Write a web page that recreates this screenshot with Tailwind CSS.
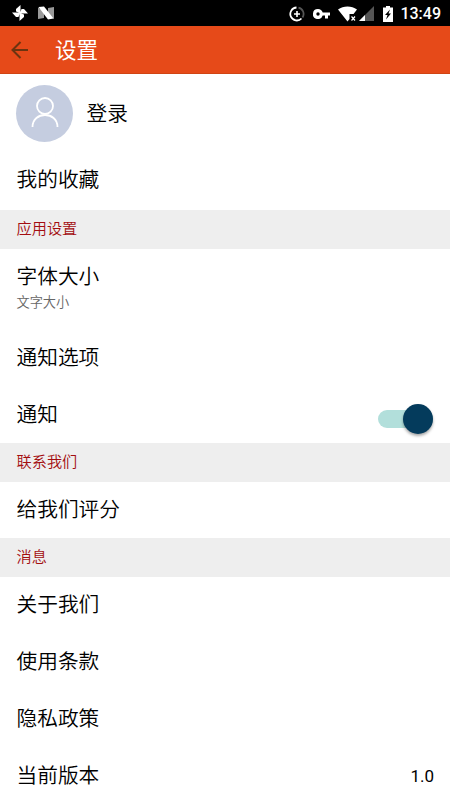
<!DOCTYPE html>
<html lang="zh-CN">
<head>
    <meta charset="UTF-8">
    <meta name="viewport" content="width=device-width, initial-scale=1.0">
    <title>设置</title>
    <script src="https://cdn.jsdelivr.net/npm/@tailwindcss/browser@4"></script>
</head>
<body class="w-[450px] h-[800px] overflow-hidden bg-white text-black font-['Roboto','Noto_Sans_CJK_SC',sans-serif]">
    <!-- Status bar -->
    <div class="flex h-[26px] items-center justify-between bg-black pl-3 pr-[9px] text-white">
        <div class="flex items-center gap-[10px]">
            <svg class="h-4 w-4" viewBox="0 0 16 16" fill="#fff">
                <path d="M8.500 8L8.500 0L4 4V6.500zM8 8.500L16 8.500L12 4H9.500zM7.500 8L7.500 16L12 12V9.500zM8 7.500L0 7.500L4 12H6.500z" />
            </svg>
            <svg class="h-[14px] w-4" viewBox="0 0 16 14">
                <path fill="#999" d="M0 1.500L6 5V12L0 13zM10 2L16 1V13L10 9z" />
                <path fill="#fff" d="M0.500 1L6 .5L15.500 12.500L10 13.500z" />
            </svg>
        </div>
        <div class="flex items-center pt-px">
            <svg class="h-4 w-4" viewBox="0 0 16 16" fill="none" stroke="#fff">
                <path stroke="#555" stroke-width="1.800" d="M9.500 1.600A6.500 6.500 0 0 1 13.500 11.500" />
                <path stroke-width="1.800" d="M7.500 1.500A6.500 6.500 0 1 0 12.500 12.500" />
                <path stroke-width="1.600" d="M8 5V11M5 8H11" />
            </svg>
            <svg class="ml-2 h-[10px] w-[17px]" viewBox="0 0 17 10" fill="#fff">
                <path fill-rule="evenodd" d="M5 0A5 5 0 1 0 9.700 6.500H12V9.500H15V6.500H17V3.500H9.700A5 5 0 0 0 5 0zM5 3.300A1.700 1.700 0 1 1 5 6.700A1.700 1.700 0 0 1 5 3.300z" />
            </svg>
            <svg class="ml-2 h-4 w-5" viewBox="0 0 20 16">
                <path fill="#fff" d="M0 3.500C5.500-.5 13.500-.5 19 3.500L15.500 8H11.500V13L9.500 15.500z" />
                <path stroke="#fff" stroke-width="1.200" d="M13.500 10.500L17 14.500M17 10.500L13.500 14.500" />
            </svg>
            <svg class="ml-px h-[15px] w-[15px]" viewBox="0 0 15 15">
                <path fill="#555" d="M15 0V15H0z" />
                <path fill="#fff" d="M6 9V15H0z" />
            </svg>
            <svg class="ml-[9px] h-4 w-[10px]" viewBox="0 0 10 16">
                <path fill="#fff" d="M3 0H7V1.500H10V16H0V1.500H3z" />
                <path fill="#000" d="M7 3.500L2 9H4.500L3 13.500L8 7.500H5.500z" />
            </svg>
            <span class="ml-[7px] text-[16px] font-medium leading-[24px]">13:49</span>
        </div>
    </div>

    <!-- App bar -->
    <header class="flex h-12 items-center border-b border-[#d04414] bg-[#e64a19] pl-[11px] text-white">
        <svg class="h-[18px] w-[18px]" viewBox="0 0 18 18" fill="none" stroke="#6b3410" stroke-width="2">
            <path d="M17 9H2M9.500 1L1.500 9L9.500 17" />
        </svg>
        <h1 class="ml-[26px] pt-[3px] text-[21.500px]">设置</h1>
    </header>

    <main class="text-[20.700px] font-[350] leading-[30px]">
        <!-- Account -->
        <div class="flex h-[79px] items-center pl-4">
            <div class="h-[57px] w-[57px] rounded-full bg-[#c5cde0]">
                <svg class="h-full w-full" viewBox="0 0 57 57" fill="none" stroke="#fff" stroke-width="1.800">
                    <circle cx="29" cy="21" r="8" />
                    <path d="M16.500 42C16.500 26 41.500 26 41.500 42" />
                </svg>
            </div>
            <span class="ml-[13.500px]">登录</span>
        </div>
        <div class="flex h-[57px] items-center pb-[3px] pl-[16.500px]">我的收藏</div>

        <h2 class="flex h-[39px] items-center bg-[#eee] pb-0.5 pl-[16.500px] text-[15.200px] text-[#a30d10]">应用设置</h2>
        <div class="flex h-20 flex-col justify-center pb-0.5 pl-[16.500px]">
            <div>字体大小</div>
            <div class="text-[13.200px] leading-[22px] text-[#666]">文字大小</div>
        </div>
        <div class="flex h-[57px] items-center pl-[16.500px]">通知选项</div>
        <div class="flex h-[57px] items-center justify-between pl-[16.500px] pr-[17px]">
            <span>通知</span>
            <div class="mt-2 flex h-[18px] w-[55px] items-center justify-end rounded-full bg-[#b2dfdb]">
                <div class="h-[30px] w-[30px] shrink-0 rounded-full bg-[#043b5c] shadow-[0_2px_3px_rgba(0,0,0,0.35)]"></div>
            </div>
        </div>

        <h2 class="flex h-[39px] items-center bg-[#eee] pb-0.5 pl-[16.500px] text-[15.200px] text-[#a30d10]">联系我们</h2>
        <div class="flex h-14 items-center pl-[16.500px]">给我们评分</div>

        <h2 class="flex h-[39px] items-center bg-[#eee] pb-0.5 pl-[16.500px] text-[15.200px] text-[#a30d10]">消息</h2>
        <div class="flex h-[57px] items-center pb-0.5 pl-[16.500px]">关于我们</div>
        <div class="flex h-[57px] items-center pb-0.5 pl-[16.500px]">使用条款</div>
        <div class="flex h-[57px] items-center pb-0.5 pl-[16.500px]">隐私政策</div>
        <div class="flex h-[57px] items-center justify-between pb-0.5 pl-[16.500px] pr-4">
            <span>当前版本</span>
            <span class="text-[17px] font-normal">1.0</span>
        </div>
    </main>
</body>
</html>
